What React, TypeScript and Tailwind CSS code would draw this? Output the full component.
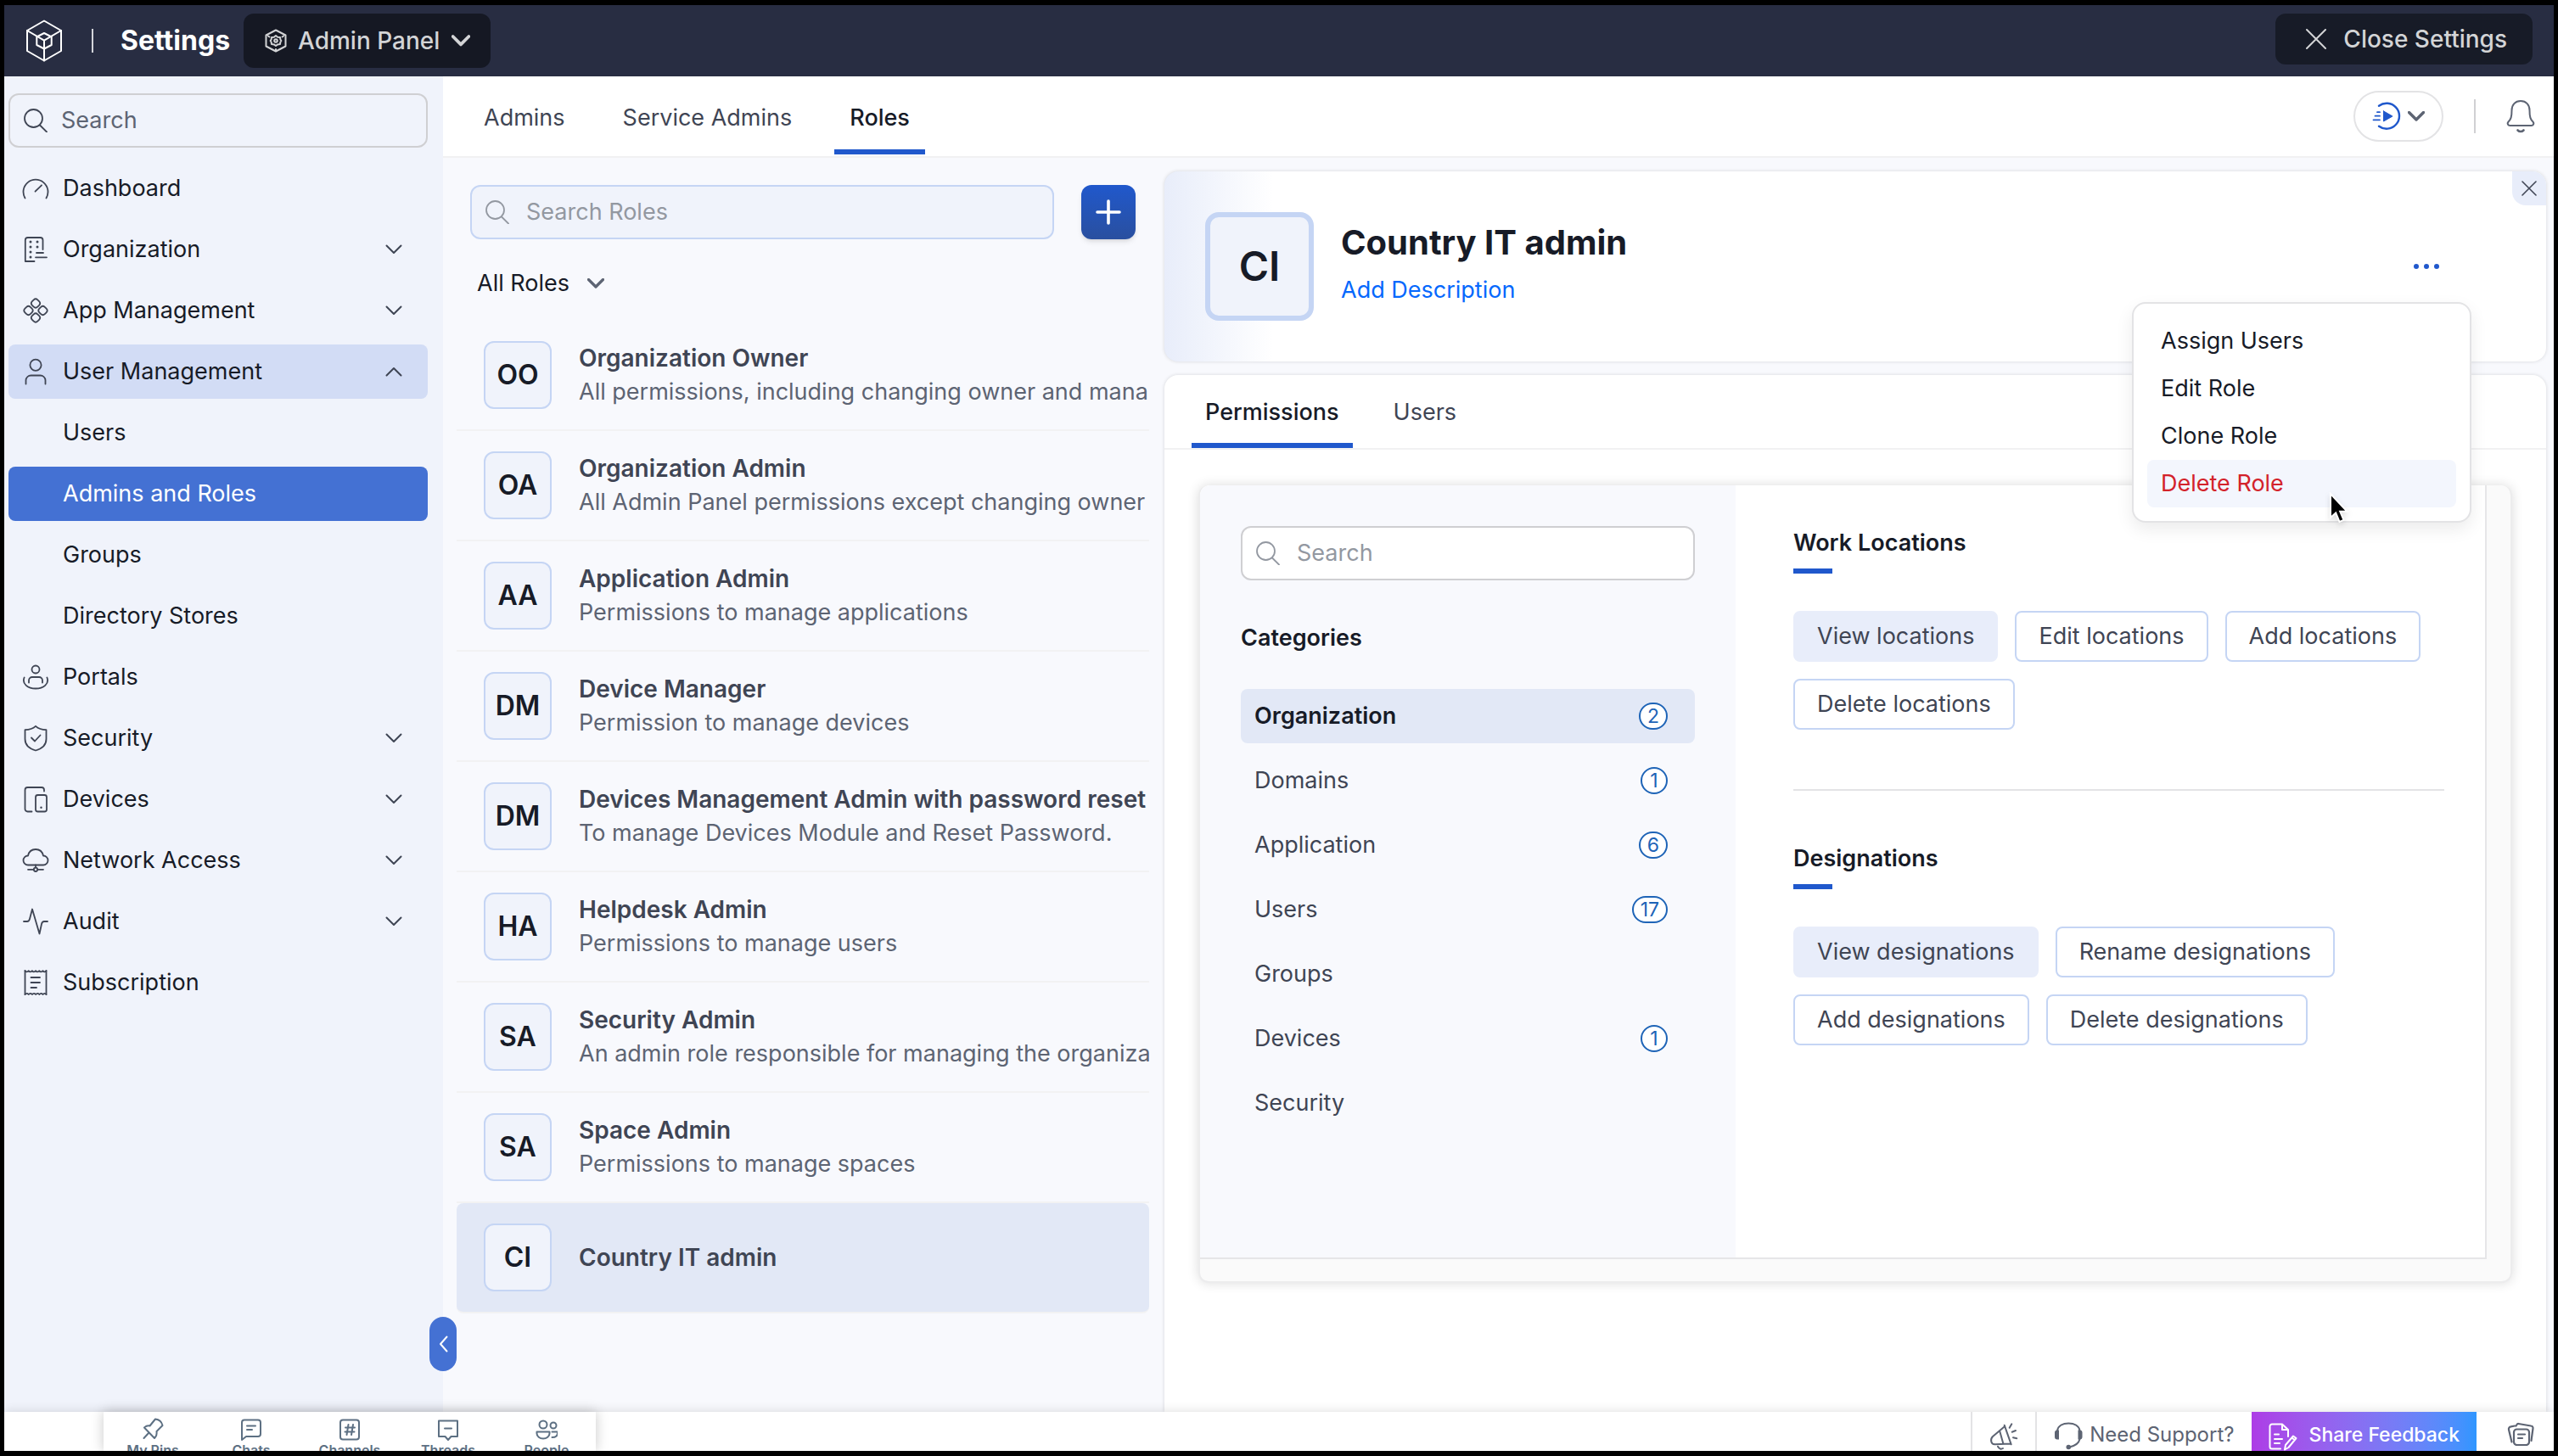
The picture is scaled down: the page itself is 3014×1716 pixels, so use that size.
import type { ReactNode } from 'react'

interface IconProps {
  children: ReactNode
  size?: string
  box?: string
  stroke?: number
  className?: string
}

function Icon({ children, size = 'w-8 h-8', box = '0 0 32 32', stroke = 1.8, className = '' }: IconProps) {
  return (
    <svg
      viewBox={box}
      className={`${size} shrink-0 ${className}`}
      fill="none"
      stroke="currentColor"
      strokeWidth={stroke}
      strokeLinecap="round"
      strokeLinejoin="round"
      aria-hidden="true"
    >
      {children}
    </svg>
  )
}

const SearchIcon = ({ className = '' }: { className?: string }) => (
  <Icon size="w-7 h-7" box="0 0 28 28" className={className}>
    <circle cx="11.5" cy="11.5" r="10.5" />
    <path d="M19 19.5 27 27.5" />
  </Icon>
)

interface ChevronProps {
  up?: boolean
  size?: string
  stroke?: number
  className?: string
}

const Chevron = ({ up = false, size = 'w-5 h-3', stroke = 2, className = '' }: ChevronProps) => (
  <Icon size={size} box="0 0 20 12" stroke={stroke} className={className}>
    <path d={up ? 'M1.5 10.5 10 2l8.5 8.5' : 'M1.5 1.5 10 10l8.5-8.5'} />
  </Icon>
)

interface NavItem {
  label: string
  icon?: ReactNode
  expand?: 'down' | 'up'
  state?: 'open' | 'active'
}

const navItems: NavItem[] = [
  {
    label: 'Dashboard',
    icon: (
      <>
        <path d="M3.5 27.5a14.5 14.5 0 1 1 25 0" />
        <path d="M15.5 19.7 23 12.3" />
      </>
    ),
  },
  {
    label: 'Organization',
    expand: 'down',
    icon: (
      <>
        <path d="M14.5 30H3.8V5a3 3 0 0 1 3-3h14.7a3 3 0 0 1 3 3v11" />
        <path d="M10 7v.1M10 13v.1M10 19v.1M10 25v.1M18 7v.1M18 13v.1" strokeWidth="3" />
        <path d="M17 20h8M16 25.3h13" />
      </>
    ),
  },
  {
    label: 'App Management',
    expand: 'down',
    icon: (
      <>
        <rect x="11.5" y="3" width="9" height="9" rx="3.2" transform="rotate(45 16 7.5)" />
        <rect x="11.5" y="20" width="9" height="9" rx="3.2" transform="rotate(45 16 24.5)" />
        <rect x="3" y="11.5" width="9" height="9" rx="3.2" transform="rotate(45 7.5 16)" />
        <rect x="20" y="11.5" width="9" height="9" rx="3.2" transform="rotate(45 24.5 16)" />
      </>
    ),
  },
  {
    label: 'User Management',
    expand: 'up',
    state: 'open',
    icon: (
      <>
        <circle cx="16" cy="8.3" r="6.6" />
        <path d="M4.5 30.5V26a6 6 0 0 1 6-5.500h11a6 6 0 0 1 6 5.500v4.500" />
      </>
    ),
  },
  { label: 'Users' },
  { label: 'Admins and Roles', state: 'active' },
  { label: 'Groups' },
  { label: 'Directory Stores' },
  {
    label: 'Portals',
    icon: (
      <>
        <circle cx="16" cy="7" r="4.5" />
        <path d="M8 22.5V20a4 4 0 0 1 4-4h8a4 4 0 0 1 4 4v2.5" />
        <path d="M2.6 16.5C-.5 24 7 29.500 16 29.500s16.500-5.500 13.400-13" />
      </>
    ),
  },
  {
    label: 'Security',
    expand: 'down',
    icon: (
      <>
        <path d="M16 1.8C13 4.5 8.5 6 3.5 6.2V17c0 7 5.500 11.500 12.500 13.500 7-2 12.500-6.500 12.500-13.500V6.200C23.500 6 19 4.500 16 1.800Z" />
        <path d="m11 15.5 4 4 6.5-7" />
      </>
    ),
  },
  {
    label: 'Devices',
    expand: 'down',
    icon: (
      <>
        <path d="M11.5 30.5h-5a3 3 0 0 1-3-3V5a3 3 0 0 1 3-3H23a3 3 0 0 1 3 3v1.5" />
        <rect x="16" y="11" width="13" height="19.5" rx="2.5" />
        <path d="M22.5 25.7v.1" strokeWidth="2.4" />
      </>
    ),
  },
  {
    label: 'Network Access',
    expand: 'down',
    icon: (
      <>
        <path d="M7 21.5h18a5.500 5.500 0 0 0 0-11C24 6 20.500 3 16 3s-8 3-9 7.500a5.500 5.500 0 0 0 0 11Z" />
        <circle cx="16" cy="26.8" r="2.2" />
        <path d="M16 21.5v3M7 26.8h6.800M18.200 26.800H25" />
      </>
    ),
  },
  {
    label: 'Audit',
    expand: 'down',
    icon: <path d="M2 16h4c1.800 0 2.500-1 3-3l3-11.500 8.500 29L23 19c.5-2 1.400-3 3-3h4" />,
  },
  {
    label: 'Subscription',
    icon: (
      <>
        <path d="M3.5 2v28M28.5 2v28" />
        <path d="M3.5 2.200q2 2.400 4.200 0 2 2.400 4.200 0 2 2.400 4.200 0 2 2.400 4.200 0 2 2.400 4.200 0 2 2.400 4 0" />
        <path d="M3.5 30q2-2.400 4.200 0 2-2.400 4.200 0 2-2.400 4.200 0 2-2.400 4.200 0 2-2.400 4.200 0 2-2.400 4 0" />
        <path d="M10.5 10H21M10.5 16H21M10.5 22H17" />
      </>
    ),
  },
]

const roles = [
  { initials: 'OO', name: 'Organization Owner', desc: 'All permissions, including changing owner and mana' },
  { initials: 'OA', name: 'Organization Admin', desc: 'All Admin Panel permissions except changing owner' },
  { initials: 'AA', name: 'Application Admin', desc: 'Permissions to manage applications' },
  { initials: 'DM', name: 'Device Manager', desc: 'Permission to manage devices' },
  { initials: 'DM', name: 'Devices Management Admin with password reset', desc: 'To manage Devices Module and Reset Password.' },
  { initials: 'HA', name: 'Helpdesk Admin', desc: 'Permissions to manage users' },
  { initials: 'SA', name: 'Security Admin', desc: 'An admin role responsible for managing the organiza' },
  { initials: 'SA', name: 'Space Admin', desc: 'Permissions to manage spaces' },
  { initials: 'CI', name: 'Country IT admin', desc: '', selected: true },
]

const categories = [
  { name: 'Organization', count: 2, selected: true },
  { name: 'Domains', count: 1 },
  { name: 'Application', count: 6 },
  { name: 'Users', count: 17 },
  { name: 'Groups' },
  { name: 'Devices', count: 1 },
  { name: 'Security' },
]

const chatTabs = [
  {
    label: 'My Pins',
    icon: <path d="M16 2.500c4.500.5 7.500 3 8.500 7.500l-7 7c.5 3-.5 6-2.500 8L3 12.500c2-1.800 4-2.500 6.500-2L16 2.500ZM8.500 18.500l-6 6.500" />,
  },
  {
    label: 'Chats',
    icon: <path d="M2 27V6.500a3 3 0 0 1 3-3h16a3 3 0 0 1 3 3V20a3 3 0 0 1-3 3H7l-5 4ZM8 10.500h10M8 15h6" />,
  },
  {
    label: 'Channels',
    icon: (
      <>
        <rect x="2" y="3.5" width="22" height="23" rx="3" />
        <path d="M11.5 9 9.500 21M17 9l-2 12M8 12.500h11M7.500 17.500h11" />
      </>
    ),
  },
  {
    label: 'Threads',
    icon: <path d="M2 4.500h22V23h-7.500L13 27l-3.500-4H2V4.500ZM9 13.500h8" />,
  },
  {
    label: 'People',
    icon: (
      <>
        <circle cx="9" cy="9" r="4.5" />
        <circle cx="21" cy="10" r="3.5" />
        <path d="M1.5 17.500h15v2a7.500 6 0 0 1-15 0v-2ZM19.500 17.500h6.500c.5 4.500-2 6.500-6.500 6.500" />
      </>
    ),
  },
]

function TopBar() {
  return (
    <header className="flex items-center h-[84px] shrink-0 bg-[#282d42] px-[25px] text-white">
      <Icon size="w-11 h-[50px]" box="0 0 44 50" stroke={2}>
        <path d="m22 1.5 20 11.500v24L22 48.500 2 37V13L22 1.500Z" />
        <path d="m22 16 8.700 4.500V30L22 34.500 13.300 30v-9.500L22 16Z" />
        <path d="m2 13 20 11.700L42 13M22 24.700v23.800" />
      </Icon>
      <span className="w-[2px] h-7 bg-[#d3d5da] ml-[34px] mr-8" />
      <h1 className="text-[32px] font-bold">Settings</h1>
      <button className="flex items-center h-16 ml-4 px-6 rounded-xl bg-[#151823] text-[#d3d4d6] text-[28px] font-medium">
        <Icon size="w-7 h-7" box="0 0 28 28" stroke={2} className="mr-3">
          <path d="m14 1.5 11.500 6v13l-11.500 6-11.500-6v-13l11.500-6ZM14 24v2.500M5 8.500l1.500 1M23 8.500l-1.500 1" />
          <path d="m14 8 2.200 1.700 2.800.4.400 2.600 1 1.300-1 1.500-.4 2.500-2.800.4L14 20l-2.200-1.600-2.800-.4-.4-2.500-1-1.500 1-1.300.4-2.600 2.800-.4L14 8Z" />
          <circle cx="14" cy="14" r="1.8" />
        </Icon>
        Admin Panel
        <Chevron size="w-[22px] h-[14px]" stroke={3.4} className="ml-[14px]" />
      </button>
      <button className="flex items-center gap-5 h-[60px] mb-1 ml-auto pl-9 pr-[30px] rounded-xl bg-[#171b27] text-[#d3d4d6] text-[28px] font-medium">
        <Icon size="w-6 h-6" box="0 0 24 24" stroke={2}>
          <path d="m1 1 22 22M23 1 1 23" />
        </Icon>
        Close Settings
      </button>
    </header>
  )
}

function Sidebar() {
  return (
    <aside className="relative w-[517px] shrink-0 bg-[#f0f3fb] pt-5 pl-[5px] pr-[18px]">
      <label className="flex items-center gap-4 h-16 px-4 rounded-xl border-2 border-[#cfcfd2] text-[#3f4554]">
        <SearchIcon />
        <input
          type="text"
          aria-label="Search settings"
          placeholder="Search"
          className="w-full bg-transparent outline-none text-[27px] placeholder:text-[#5d6473]"
        />
      </label>
      <nav className="flex flex-col gap-2 mt-4">
        {navItems.map(item => (
          <a
            key={item.label}
            href="#"
            className={`flex items-center gap-4 h-16 pl-4 pr-[30px] rounded-lg text-[27px] ${
              item.state === 'active'
                ? 'bg-[#4471d3] text-white'
                : item.state === 'open'
                  ? 'bg-[#d2dcf5] text-[#171b27]'
                  : 'text-[#171b27]'
            }`}
          >
            {item.icon ? <Icon className="text-[#3f4554]">{item.icon}</Icon> : <span className="w-8" />}
            <span className="flex-1">{item.label}</span>
            {item.expand && <Chevron up={item.expand === 'up'} className="text-[#3f4554]" />}
          </a>
        ))}
      </nav>
      <button
        aria-label="Collapse sidebar"
        className="absolute -right-4 bottom-12 z-10 flex items-center justify-center w-8 h-16 rounded-full bg-[#4471d3] text-white"
      >
        <Icon size="w-[11px] h-5" box="0 0 11 20" stroke={2}>
          <path d="M9.5 1.500 2 10l7.500 8.500" />
        </Icon>
      </button>
    </aside>
  )
}

function TabBar() {
  return (
    <div className="flex items-center h-24 shrink-0 bg-white border-b-2 border-[#f1f1f2] pl-[30px] pr-[22px]">
      <nav className="flex gap-8 self-stretch text-[27px] text-[#3f4554]">
        <a href="#" className="flex items-center px-[18px] mt-3 mb-[2px] border-b-[6px] border-transparent">Admins</a>
        <a href="#" className="flex items-center px-[18px] mt-3 mb-[2px] border-b-[6px] border-transparent">Service Admins</a>
        <a
          href="#"
          aria-current="page"
          className="flex items-center px-[18px] mt-3 mb-[2px] border-b-[6px] border-[#2058cc] font-medium text-[#171b27]"
        >
          Roles
        </a>
      </nav>
      <button aria-label="Quick actions" className="flex items-center gap-2 h-[60px] ml-auto px-5 rounded-full border-2 border-[#e3e3e5]">
        <Icon size="w-[34px] h-[34px]" box="0 0 34 34" stroke={2.4} className="text-[#2058cc]">
          <path d="M8 4.700a15 15 0 1 1 0 24" />
          <path d="M6 12.200h3M3.500 16.700H9M1.500 21.300H9" strokeWidth="1.8" />
          <path d="M13.5 11v12l10.500-6-10.500-6Z" fill="currentColor" strokeWidth="1" />
        </Icon>
        <Chevron size="w-5 h-3" stroke={3.4} className="text-[#5d6473]" />
      </button>
      <span className="w-[2px] h-10 bg-[#d0d0d3] mx-9" />
      <button aria-label="Notifications" className="text-[#5d6473]">
        <Icon size="w-[34px] h-10" box="0 0 34 40" stroke={2}>
          <path d="M17 2C10.500 2 6.500 6.500 6.500 13c0 8-1 10.500-4 13.500C.8 28.500 2 31 4.500 31h25c2.500 0 3.700-2.500 2-4.500-3-3-4-5.500-4-13.500C27.500 6.500 23.500 2 17 2Z" />
          <path d="M13.500 36.500c2 2 5 2 7 0" strokeWidth="2.600" />
        </Icon>
      </button>
    </div>
  )
}

function RoleList() {
  return (
    <section className="w-[832px] shrink-0 pl-4 pt-8">
      <div className="flex gap-8 px-4">
        <label className="flex flex-1 items-center gap-5 h-16 px-4 rounded-xl border-2 border-[#c5d5f4] bg-[#f0f3fb] text-[#9398a1]">
          <SearchIcon />
          <input
            type="text"
            aria-label="Search roles"
            placeholder="Search Roles"
            className="w-full bg-transparent outline-none text-[27px] placeholder:text-[#9398a1]"
          />
        </label>
        <button
          aria-label="Add role"
          className="flex items-center justify-center w-16 h-16 rounded-xl bg-linear-to-b from-[#2058cc] to-[#294f9f] shadow-md text-white"
        >
          <Icon size="w-[30px] h-[30px]" box="0 0 30 30" stroke={3.6}>
            <path d="M15 2v26M2 15h26" />
          </Icon>
        </button>
      </div>
      <div className="flex items-center h-24 pl-6 pt-2">
        <select aria-label="Filter roles" className="appearance-none bg-transparent pr-5 text-[27px] text-[#171b27]">
          <option>All Roles</option>
        </select>
        <Chevron size="w-5 h-3" stroke={3.2} className="text-[#5d6473]" />
      </div>
      <ul>
        {roles.map(role => (
          <li
            key={role.name}
            className={`flex items-center gap-8 h-[130px] pl-8 border-b-2 border-[#f2f2f3] ${role.selected ? 'bg-[#e2e8f6] rounded-lg' : ''}`}
          >
            <span className="flex items-center justify-center w-20 h-20 shrink-0 rounded-xl border-2 border-[#c5d5f4] bg-[#f0f3fb] text-[32px] font-semibold text-[#171b27]">
              {role.initials}
            </span>
            <div className="min-w-0 flex-1 overflow-hidden whitespace-nowrap leading-10">
              <p className="text-[28px] font-semibold text-[#3f4554]">{role.name}</p>
              {role.desc && <p className="text-[27px] text-[#5d6473]">{role.desc}</p>}
            </div>
          </li>
        ))}
      </ul>
    </section>
  )
}

function RoleMenu() {
  return (
    <div
      role="menu"
      className="absolute right-[88px] top-[154px] z-20 flex flex-col w-[400px] p-4 rounded-2xl border-2 border-[#e3e3e5] bg-white shadow-[0_8px_20px_rgba(0,0,0,0.08)] text-[27px] text-[#171b27]"
    >
      <button role="menuitem" className="h-14 px-4 rounded-lg text-left">Assign Users</button>
      <button role="menuitem" className="h-14 px-4 rounded-lg text-left">Edit Role</button>
      <button role="menuitem" className="h-14 px-4 rounded-lg text-left">Clone Role</button>
      <button role="menuitem" className="h-14 px-4 rounded-lg text-left bg-[#f3f6fd] text-[#d3232b]">Delete Role</button>
      {/* Mouse pointer */}
      <svg viewBox="0 0 24 38" className="absolute left-[230px] top-[222px] w-6 h-[38px] drop-shadow-md" aria-hidden="true">
        <path d="M2 2v28l6.200-5.500 4.300 10.500 5-2.200-4.300-10h8.300L2 2Z" fill="#000" stroke="#fff" strokeWidth="2" />
      </svg>
    </div>
  )
}

function RoleHeader() {
  return (
    <section className="relative flex items-center gap-8 h-56 shrink-0 pl-12 pr-[124px] rounded-2xl bg-white bg-linear-to-r from-[#e8edfa] to-white to-[128px] shadow-[0_0_4px_rgba(0,0,0,0.14)]">
      <span className="flex items-center justify-center w-32 h-32 shrink-0 rounded-2xl border-[6px] border-[#c5d5f4] bg-[#f0f3fb] text-[48px] font-semibold text-[#171b27]">
        CI
      </span>
      <div className="flex-1">
        <h2 className="text-[40px] leading-[56px] font-bold text-[#171b27]">Country IT admin</h2>
        <a href="#" className="block text-[27px] leading-[56px] text-[#0568fd]">Add Description</a>
      </div>
      <button aria-label="More actions" className="flex h-8 items-center gap-[6px] px-[2px]">
        <span className="w-[6px] h-[6px] rounded-full bg-[#2058cc]" />
        <span className="w-[6px] h-[6px] rounded-full bg-[#2058cc]" />
        <span className="w-[6px] h-[6px] rounded-full bg-[#2058cc]" />
      </button>
      <button
        aria-label="Close role"
        className="absolute right-0 top-0 flex items-center justify-center w-10 h-10 rounded-tr-2xl rounded-bl-2xl bg-[#e8edfa] text-[#3f4554]"
      >
        <Icon size="w-[18px] h-[18px]" box="0 0 18 18" stroke={1.6}>
          <path d="m1 1 16 16M17 1 1 17" />
        </Icon>
      </button>
      <RoleMenu />
    </section>
  )
}

function PermissionGroup({ title, items }: { title: string; items: string[] }) {
  return (
    <div>
      <h3 className="text-[27px] leading-9 font-semibold text-[#171b27]">{title}</h3>
      <div className="w-[46px] h-[6px] mt-3 bg-[#2058cc]" />
      <div className="flex flex-wrap gap-5 mt-11">
        {items.map((item, i) => (
          <button
            key={item}
            aria-pressed={i === 0}
            className={`h-[60px] px-[26px] rounded-lg border-2 text-[27px] text-[#3f4554] ${
              i === 0 ? 'border-[#e8edfa] bg-[#e8edfa]' : 'border-[#c5d5f4] bg-white'
            }`}
          >
            {item}
          </button>
        ))}
      </div>
    </div>
  )
}

function PermissionsCard() {
  return (
    <section className="flex-1 rounded-t-2xl bg-white shadow-[0_0_4px_rgba(0,0,0,0.14)]">
      <nav className="flex gap-8 h-[88px] pl-8 border-b-2 border-[#f1f1f2] text-[27px]">
        <a href="#" aria-current="page" className="flex items-center px-4 pt-2 border-b-[6px] border-[#2058cc] font-medium text-[#171b27]">
          Permissions
        </a>
        <a href="#" className="flex items-center px-4 pt-2 border-b-[6px] border-transparent text-[#3f4554]">Users</a>
      </nav>
      <div className="mx-10 mt-[42px] pr-7 pb-[26px] rounded-xl border-2 border-[#ececed] border-t-0 bg-[#fafafa] shadow-[0_0_14px_rgba(0,0,0,0.14)]">
        <div className="flex border-r-2 border-b-2 border-[#e6e6e8] bg-white rounded-tl-xl">
          <div className="w-[631px] shrink-0 px-12 pt-12 pb-[150px] bg-[#f8f9fd] rounded-tl-xl">
            <label className="flex items-center gap-5 h-16 px-4 rounded-xl border-2 border-[#cfcfd2] bg-white text-[#9398a1]">
              <SearchIcon />
              <input
                type="text"
                aria-label="Search permissions"
                placeholder="Search"
                className="w-full bg-transparent outline-none text-[27px] placeholder:text-[#9398a1]"
              />
            </label>
            <h3 className="mt-[50px] text-[27px] leading-9 font-semibold text-[#171b27]">Categories</h3>
            <ul className="flex flex-col gap-3 mt-[42px]">
              {categories.map(cat => (
                <li key={cat.name}>
                  <button
                    className={`flex items-center justify-between w-full h-16 pl-4 pr-8 rounded-lg text-[27px] ${
                      cat.selected ? 'bg-[#e2e8f6] font-semibold text-[#171b27]' : 'text-[#3f4554]'
                    }`}
                  >
                    {cat.name}
                    {cat.count && (
                      <span className="flex items-center justify-center h-8 min-w-8 px-2 rounded-full border-2 border-[#1e64b7] bg-white text-[23px] font-normal text-[#1e64b7]">
                        {cat.count}
                      </span>
                    )}
                  </button>
                </li>
              ))}
            </ul>
          </div>
          <div className="flex-1 pl-[68px] pr-12 pt-[50px]">
            <PermissionGroup title="Work Locations" items={['View locations', 'Edit locations', 'Add locations', 'Delete locations']} />
            <hr className="mt-[70px] mb-[62px] border-t-2 border-[#e3e3e5]" />
            <PermissionGroup title="Designations" items={['View designations', 'Rename designations', 'Add designations', 'Delete designations']} />
          </div>
        </div>
      </div>
    </section>
  )
}

function BottomBar() {
  return (
    <footer className="relative z-30 flex h-[46px] shrink-0 bg-white shadow-[0_0_12px_rgba(0,0,0,0.14)] text-[#5d6473] text-[24px]">
      <div className="flex h-[46px] ml-[117px] overflow-hidden shadow-[0_0_14px_rgba(0,0,0,0.22)]">
        {chatTabs.map(tab => (
          <button key={tab.label} className="flex flex-col items-center w-[116px] pt-[6px] text-[16px] leading-5 font-semibold text-[#5d7083]">
            <Icon size="w-[26px] h-7" box="0 0 26 28" stroke={2}>{tab.icon}</Icon>
            <span className="mt-[1px]">{tab.label}</span>
          </button>
        ))}
      </div>
      <button aria-label="Announcements" className="flex justify-center w-[76px] pt-3 ml-auto border-l-2 border-[#e3e3e5]">
        <Icon size="w-[34px] h-[34px]" box="0 0 34 34" stroke={2}>
          <path d="m17.700 3.700 8 22.600M18.200 5 4 17C.5 20.500 2 26.500 6.500 26.300L25 25.500M12.300 11l4 14.300M10 28.700c1.500 3 4 3.600 6 2.300" />
          <path d="m23.700 6.800 2.600-4.500M26.700 11.700 31 10M28 18.300l4.300 1" />
        </Icon>
      </button>
      <a href="#" className="flex gap-2 pt-3 px-5 border-l-2 border-[#e3e3e5] whitespace-nowrap leading-[30px]">
        <Icon size="w-[34px] h-[34px]" box="0 0 34 34" stroke={2}>
          <path d="M4 10C5 4.500 10.500 1.500 17.300 1.500S29.500 4.500 30.500 10M30.500 20c-1 5-6 8-12 9.500" />
          <path d="M6 9.500v11H4a3 3 0 0 1-3-3v-5a3 3 0 0 1 3-3h2ZM28.500 9.500v11h2a3 3 0 0 0 3-3v-5a3 3 0 0 0-3-3h-2Z" fill="currentColor" stroke="none" />
          <circle cx="17.3" cy="29.5" r="2.8" fill="currentColor" stroke="none" />
        </Icon>
        Need Support?
      </a>
      <button className="flex gap-[14px] pt-3 px-5 bg-linear-to-r from-[#ad3ce6] to-[#2e96ff] whitespace-nowrap text-[23px] leading-[30px] font-medium text-white">
        <Icon size="w-[34px] h-[34px]" box="0 0 34 34" stroke={2}>
          <path d="M14 31.500H4a2.500 2.500 0 0 1-2.500-2.500V5A2.500 2.500 0 0 1 4 2.500h12L23 9v8M16 2.500V9h7" />
          <path d="M7 14.500h5M7 20h9M7 25h6" />
          <path d="m19 32.500 1-5.500 9-10.500 3.500 2.500-9 11-4.500 2.500ZM27.500 18.500l3 2.500" />
        </Icon>
        Share Feedback
      </button>
      <button aria-label="Clipboard" className="flex justify-center w-[91px] pt-3 pl-3">
        <Icon size="w-8 h-7" box="0 0 32 28" stroke={2.2}>
          <rect x="8" y="8.5" width="18" height="18.5" rx="3.5" />
          <path d="M13 14.500h8M13 19h5M5.500 23.500 2 9a3 3 0 0 1 2.500-3.700L9 4.500M10.500 4.500l1-1.500a2 2 0 0 1 2-1L28 4.500A2.500 2.500 0 0 1 30.500 7.500L28.500 22" />
        </Icon>
      </button>
    </footer>
  )
}

export default function App() {
  return (
    <div className="flex flex-col h-screen overflow-hidden border-x-[5px] border-y-[6px] border-black bg-[#f8f9fd] font-[Inter,sans-serif]">
      <TopBar />
      <div className="flex flex-1 min-h-0">
        <Sidebar />
        <main className="flex flex-col flex-1 min-w-0">
          <TabBar />
          <div className="flex flex-1 min-h-0">
            <RoleList />
            <div className="flex flex-col flex-1 min-w-0 gap-4 pt-4 pl-[18px] pr-[9px]">
              <RoleHeader />
              <PermissionsCard />
            </div>
          </div>
        </main>
      </div>
      <BottomBar />
    </div>
  )
}
